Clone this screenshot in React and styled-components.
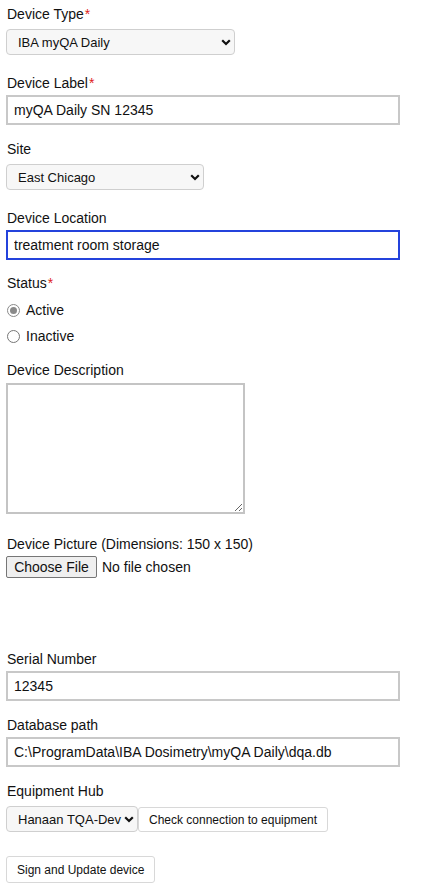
import { useEffect, useRef } from "react";
import styled, { createGlobalStyle } from "styled-components";

const GlobalStyle = createGlobalStyle`
  body {
    margin: 0;
    background: #fff;
    font-family: "Liberation Sans", Arial, sans-serif;
    color: #111;
  }
`;

const Form = styled.form`
  display: flex;
  flex-direction: column;
  align-items: flex-start;
  padding: 6px 0 0 6px;
  width: 394px;
`;

const Field = styled.div`
  display: flex;
  flex-direction: column;
  align-items: flex-start;
  margin-bottom: ${(p) => (p.$gap === undefined ? 16 : p.$gap)}px;
`;

const Label = styled.label`
  display: block;
  font-size: 14px;
  line-height: 16px;
  margin: 0 0 4px 1px;
`;

const Star = styled.span`
  color: #e02020;
  margin-left: 1px;
`;

const SelectWrap = styled.div`
  position: relative;
  width: ${(p) => p.$width}px;
  margin: 3px 0 4px;
`;

const Select = styled.select`
  appearance: none;
  display: block;
  width: 100%;
  height: 26px;
  padding: 0 14px 0 11px;
  border: 1px solid #cfcfcf;
  border-radius: 4px;
  background: #f7f7f7;
  font-family: "Liberation Sans", Arial, sans-serif;
  font-size: 13px;
  color: #111;
  outline: none;
`;

const Chevron = styled.svg`
  position: absolute;
  right: 4px;
  top: 10px;
  pointer-events: none;
`;

const Input = styled.input`
  box-sizing: border-box;
  display: block;
  width: 394px;
  height: 30px;
  padding: 0 6px;
  border: 2px solid ${(p) => (p.$focused ? "#2443dc" : "#c8c8c8")};
  font-family: "Liberation Sans", Arial, sans-serif;
  font-size: 14px;
  color: #111;
  outline: none;
`;

const Radios = styled.div`
  display: flex;
  flex-direction: column;
  gap: 10px;
  margin-top: 7px;
`;

const RadioRow = styled.label`
  display: flex;
  align-items: center;
  gap: 6px;
  font-size: 14px;
  line-height: 16px;
  height: 16px;
`;

const Radio = styled.input`
  appearance: none;
  margin: 0 0 0 1px;
  width: 13px;
  height: 13px;
  border: 1px solid #767676;
  border-radius: 50%;
  background: #fff;
  position: relative;
  &:checked {
    border-color: #8a8a8a;
  }
  &:checked::after {
    content: "";
    position: absolute;
    inset: 2px;
    border-radius: 50%;
    background: #8a8a8a;
  }
`;

const TextArea = styled.textarea`
  display: block;
  box-sizing: border-box;
  width: 239px;
  height: 131px;
  margin-top: 1px;
  border: 2px solid #c4c4c4;
  resize: both;
  font-family: "Liberation Sans", Arial, sans-serif;
  font-size: 13px;
  outline: none;
`;

const FileRow = styled.div`
  display: flex;
  align-items: center;
  gap: 5px;
  font-size: 14px;
`;

const FileButton = styled.button`
  height: 22px;
  width: 91px;
  padding: 0;
  border: 1px solid #767676;
  border-radius: 2px;
  background: #efefef;
  font-family: "Liberation Sans", Arial, sans-serif;
  font-size: 14px;
  color: #111;
`;

const PreviewSpace = styled.div`
  height: 73px;
`;

const HubRow = styled.div`
  display: flex;
  align-items: center;
`;

const Button = styled.button`
  height: ${(p) => p.$height || 26}px;
  padding: 0 10px;
  border: 1px solid #d8d8d8;
  border-radius: 3px;
  background: #fff;
  font-family: "Liberation Sans", Arial, sans-serif;
  font-size: 12px;
  color: #111;
  margin-top: ${(p) => p.$top || 0}px;
`;

const SelectBox = ({ width, value }) => (
  <SelectWrap $width={width}>
    <Select defaultValue={value}>
      <option>{value}</option>
    </Select>
    <Chevron width="10" height="7" viewBox="0 0 10 7">
      <path d="M1.2 1.2 L5 5 L8.8 1.2" fill="none" stroke="#111" strokeWidth="2.2" />
    </Chevron>
  </SelectWrap>
);

export default function App() {
  const locRef = useRef(null);

  useEffect(() => {
    const el = locRef.current;
    if (el) {
      el.focus();
      el.setSelectionRange(el.value.length, el.value.length);
    }
  }, []);

  return (
    <>
      <GlobalStyle />
      <Form onSubmit={(e) => e.preventDefault()}>
        <Field>
          <Label>
            Device Type<Star>*</Star>
          </Label>
          <SelectBox width={229} value="IBA myQA Daily" />
        </Field>
        <Field>
          <Label>
            Device Label<Star>*</Star>
          </Label>
          <Input defaultValue="myQA Daily SN 12345" />
        </Field>
        <Field>
          <Label>Site</Label>
          <SelectBox width={198} value="East Chicago" />
        </Field>
        <Field $gap={15}>
          <Label>Device Location</Label>
          <Input ref={locRef} $focused defaultValue="treatment room storage" />
        </Field>
        <Field $gap={18}>
          <Label>
            Status<Star>*</Star>
          </Label>
          <Radios>
            <RadioRow>
              <Radio type="radio" name="status" defaultChecked />
              Active
            </RadioRow>
            <RadioRow>
              <Radio type="radio" name="status" />
              Inactive
            </RadioRow>
          </Radios>
        </Field>
        <Field $gap={22}>
          <Label>Device Description</Label>
          <TextArea />
        </Field>
        <Field $gap={0}>
          <Label>Device Picture (Dimensions: 150 x 150)</Label>
          <FileRow>
            <FileButton type="button">Choose File</FileButton>
            <span>No file chosen</span>
          </FileRow>
          <PreviewSpace />
        </Field>
        <Field>
          <Label>Serial Number</Label>
          <Input defaultValue="12345" />
        </Field>
        <Field>
          <Label>Database path</Label>
          <Input defaultValue="C:\ProgramData\IBA Dosimetry\myQA Daily\dqa.db" />
        </Field>
        <Field $gap={0}>
          <Label>Equipment Hub</Label>
          <HubRow>
            <SelectBox width={132} value="Hanaan TQA-Dev" />
            <Button type="button" $height={25}>
              Check connection to equipment
            </Button>
          </HubRow>
        </Field>
        <Button type="button" $height={27} $top={20}>
          Sign and Update device
        </Button>
      </Form>
    </>
  );
}
